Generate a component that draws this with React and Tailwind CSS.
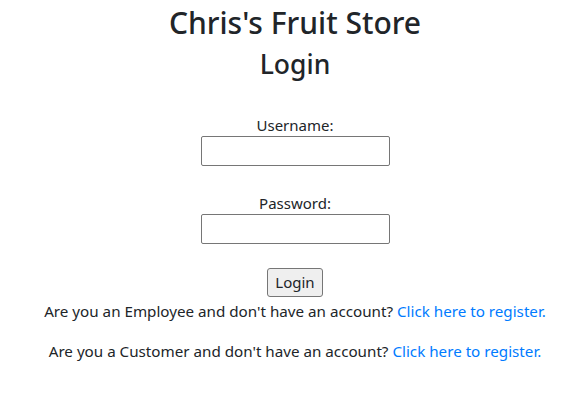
export default function App() {
  return (
    <div
      className="flex min-h-screen flex-col items-center bg-white pl-[6px] text-[#212529]"
      style={{ fontFamily: '"Segoe UI", "Noto Sans", Roboto, sans-serif' }}
    >
      <h2 className="mt-[4px] text-[30px] font-medium leading-[38px]">Chris's Fruit Store</h2>
      <h3 className="mt-[5px] text-[26.5px] font-medium leading-[34px]">Login</h3>

      <form className="mt-[33px] flex flex-col items-center" onSubmit={(e) => e.preventDefault()}>
        <label htmlFor="username" className="text-[15px] leading-[22px]">
          Username:
        </label>
        <input
          id="username"
          type="text"
          className="h-[30px] w-[189px] rounded-[2px] border border-[#767676] bg-white px-1"
        />

        <label htmlFor="password" className="mt-[26px] text-[15px] leading-[22px]">
          Password:
        </label>
        <input
          id="password"
          type="password"
          className="h-[30px] w-[189px] rounded-[2px] border border-[#767676] bg-white px-1"
        />

        <button
          type="submit"
          className="mt-[24px] h-[29px] w-[56px] rounded-[3px] border border-[#767676] bg-[#efefef] text-[15px]"
        >
          Login
        </button>
      </form>

      <p className="mt-[2px] text-[15.2px] leading-[24px]">
        Are you an Employee and don't have an account?{" "}
        <a href="#" className="text-[#007bff]">
          Click here to register.
        </a>
      </p>
      <p className="mt-[16px] text-[15.2px] leading-[24px]">
        Are you a Customer and don't have an account?{" "}
        <a href="#" className="text-[#007bff]">
          Click here to register.
        </a>
      </p>
    </div>
  );
}
